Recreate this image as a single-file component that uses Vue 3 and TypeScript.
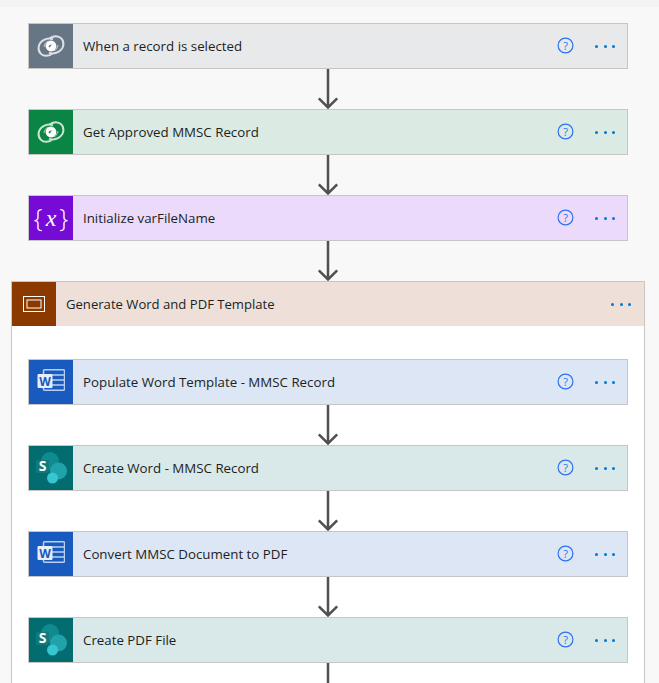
<template>
  <div class="page">
    <div class="top-band"></div>
    <div class="flow">
      <template v-for="step in topSteps" :key="step.title">
        <div class="card" :class="step.kind">
          <div class="card-icon"><StepIcon :kind="step.kind" /></div>
          <span class="card-title">{{ step.title }}</span>
          <svg class="help" width="17" height="17" viewBox="0 0 17 17">
            <circle cx="8.5" cy="8.5" r="7.4" />
            <text x="8.5" y="12.5" text-anchor="middle">?</text>
          </svg>
          <span class="dots"><i></i><i></i><i></i></span>
        </div>
        <svg class="arrow" width="24" height="40" viewBox="0 0 24 40">
          <path d="M12 0V38M2.8 29.3L12 38.5L21.2 29.3" />
        </svg>
      </template>
    </div>
    <section class="scope">
      <header class="scope-head">
        <div class="scope-icon">
          <svg width="22" height="16" viewBox="0 0 22 16">
            <rect x="0.5" y="0.5" width="21" height="15" fill="none" stroke="#fff" />
            <rect x="4" y="4" width="14" height="8" fill="none" stroke="#fff" />
          </svg>
        </div>
        <span class="card-title">Generate Word and PDF Template</span>
        <span class="dots"><i></i><i></i><i></i></span>
      </header>
      <div class="scope-body">
        <template v-for="step in innerSteps" :key="step.title">
          <div class="card" :class="step.kind">
            <div class="card-icon"><StepIcon :kind="step.kind" /></div>
            <span class="card-title">{{ step.title }}</span>
            <svg class="help" width="17" height="17" viewBox="0 0 17 17">
              <circle cx="8.5" cy="8.5" r="7.4" />
              <text x="8.5" y="12.5" text-anchor="middle">?</text>
            </svg>
            <span class="dots"><i></i><i></i><i></i></span>
          </div>
          <svg class="arrow" width="24" height="40" viewBox="0 0 24 40">
            <path d="M12 0V38M2.8 29.3L12 38.5L21.2 29.3" />
          </svg>
        </template>
      </div>
    </section>
  </div>
</template>

<script setup lang="ts">
import { defineComponent, h } from 'vue'

type Kind = 'trigger' | 'dataverse' | 'variable' | 'word' | 'sharepoint'

interface Step {
  title: string
  kind: Kind
}

const topSteps: Step[] = [
  { title: 'When a record is selected', kind: 'trigger' },
  { title: 'Get Approved MMSC Record', kind: 'dataverse' },
  { title: 'Initialize varFileName', kind: 'variable' }
]

const innerSteps: Step[] = [
  { title: 'Populate Word Template - MMSC Record', kind: 'word' },
  { title: 'Create Word - MMSC Record', kind: 'sharepoint' },
  { title: 'Convert MMSC Document to PDF', kind: 'word' },
  { title: 'Create PDF File', kind: 'sharepoint' }
]

const svg = (w: number, h_: number, children: ReturnType<typeof h>[]) =>
  h('svg', { width: w, height: h_, viewBox: `0 0 ${w} ${h_}` }, children)

const swirl = () =>
  svg(28, 22, [
    h('path', {
      d: 'M16 4.2C9.5 2.2 2.2 6 1.6 12.5C1.2 17.5 5 21 9.5 20.8C12 20.7 14 19.8 15.5 18.2M12 17.8C18.5 19.8 25.8 16 26.4 9.5C26.8 4.5 23 1 18.5 1.2C16 1.3 14 2.2 12.5 3.8',
      fill: 'none',
      stroke: '#fff',
      'stroke-width': 2,
      opacity: 0.78
    }),
    // centre blob with a thin curved slit, the swirl in the logo
    h('path', {
      fill: '#fff',
      'fill-rule': 'evenodd',
      d: 'M14 5.6A5.4 5.4 0 1 0 14 16.4A5.4 5.4 0 1 0 14 5.6ZM11.5 11.5C12 9.6 14 9 15.6 9.6C14.6 9.9 13.6 10.6 13.3 12C13 12.6 12 12.4 11.5 11.5Z'
    }),
    h('path', { d: 'M7 12C7.5 9 9 7 11.5 6M21 10C20.5 13 19 15 16.5 16', fill: 'none', stroke: '#fff', 'stroke-width': 1.2, opacity: 0.55 })
  ])

const StepIcon = defineComponent({
  props: { kind: { type: String, required: true } },
  setup(props) {
    return () => {
      if (props.kind === 'variable') {
        return h('span', { class: 'var-glyph' }, [
          h('span', { class: 'brace' }, '{'),
          h('em', 'x'),
          h('span', { class: 'brace' }, '}')
        ])
      }
      if (props.kind === 'word') {
        return svg(28, 26, [
          h('rect', { x: 6.5, y: 0.8, width: 21, height: 20.5, rx: 1, fill: 'none', stroke: '#b9cff2', 'stroke-width': 1.5 }),
          h('path', { d: 'M15 6H27M15 11H27M15 16H27', stroke: '#b9cff2', 'stroke-width': 1.5 }),
          h('rect', { x: 0.5, y: 5, width: 15, height: 14, rx: 1, fill: '#e6eefa' }),
          h('text', { x: 8, y: 16.5, 'text-anchor': 'middle', 'font-size': 12, 'font-weight': 700, fill: '#185abd', 'font-family': 'Open Sans, sans-serif' }, 'W')
        ])
      }
      if (props.kind === 'sharepoint') {
        return svg(32, 32, [
          h('circle', { cx: 15, cy: 9, r: 9, fill: '#0f8a8e' }),
          h('circle', { cx: 23.5, cy: 19, r: 8.5, fill: '#1fa3a8' }),
          h('circle', { cx: 17.5, cy: 26, r: 5.5, fill: '#37c6d0' }),
          h('rect', { x: 1, y: 8, width: 13, height: 13, rx: 1, fill: '#0e7a7d' }),
          h('text', { x: 7.5, y: 19, 'text-anchor': 'middle', 'font-size': 14, 'font-weight': 700, fill: '#fff', 'font-family': 'Open Sans, sans-serif' }, 'S')
        ])
      }
      return swirl()
    }
  }
})
</script>

<style>
body {
  background: #f8f8f8;
  overflow: hidden;
}
</style>

<style scoped>
.page {
  height: 683px;
  overflow: hidden;
  background: #f8f8f8;
  font-family: "Open Sans", "Noto Sans", sans-serif;
  color: #201f1e;
}

.top-band {
  height: 7px;
  background: #f3f3f3;
}

.flow {
  display: flex;
  flex-direction: column;
  align-items: center;
  width: 600px;
  margin: 16px 0 0 28px;
}

.card {
  display: flex;
  align-items: center;
  flex: none;
  width: 600px;
  height: 46px;
  box-sizing: border-box;
  border: 1px solid #c8c6c4;
}

.card-icon,
.scope-icon {
  display: flex;
  align-items: center;
  justify-content: center;
  flex: none;
  width: 44px;
  height: 44px;
}

.card-title {
  flex: 1;
  padding-left: 10px;
  font-size: 13.3px;
  line-height: 20px;
}

.scope-head .card-title {
  font-size: 13.1px;
}

.help {
  flex: none;
  margin: 0 21px 1px 0;
}

.help circle {
  fill: none;
  stroke: #2f72ee;
  stroke-width: 1.2;
}

.help text {
  fill: #2f72ee;
  font-size: 11px;
  font-family: "Open Sans", sans-serif;
}

.dots {
  display: flex;
  flex: none;
  gap: 5.5px;
  margin-right: 12px;
}

.dots i {
  display: block;
  width: 3px;
  height: 3px;
  border-radius: 50%;
  background: #0078d4;
}

.arrow {
  display: block;
  flex: none;
}

.arrow path {
  fill: none;
  stroke: #505050;
  stroke-width: 2.5;
}

.trigger { background: #e8e9eb; }
.trigger .card-icon { background: #667685; }
.dataverse { background: #dbebe3; }
.dataverse .card-icon { background: #0a8543; }
.variable { background: #ebdaf9; }
.variable .card-icon { background: #770bd6; }
.word { background: #dce6f5; }
.word .card-icon { background: #185abd; }
.sharepoint { background: #d9e8e9; }
.sharepoint .card-icon { background: #036c70; }

.scope {
  width: 634px;
  box-sizing: border-box;
  margin-left: 11px;
  border: 1px solid #c8c6c4;
  border-bottom: 0;
  background: #fff;
}

.scope-head {
  display: flex;
  align-items: center;
  height: 44px;
  background: #eee0d9;
}

.scope-icon {
  background: #8c3900;
}

.scope-head .dots {
  margin-right: 13px;
}

.scope-body {
  display: flex;
  flex-direction: column;
  align-items: center;
  padding: 33px 16px 0;
}

:deep(.var-glyph) {
  display: flex;
  align-items: center;
  gap: 3px;
  color: #fff;
  font-family: "Liberation Serif", serif;
}

:deep(.var-glyph .brace) {
  font-family: "Open Sans", sans-serif;
  font-size: 25px;
  font-weight: 300;
  line-height: 28px;
  padding-bottom: 3px;
}

:deep(.var-glyph em) {
  font-size: 24px;
  line-height: 28px;
}
</style>
